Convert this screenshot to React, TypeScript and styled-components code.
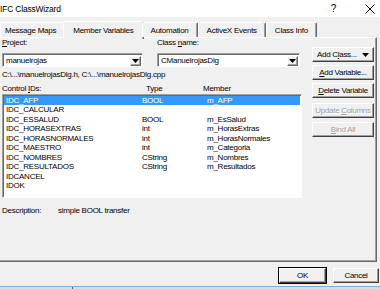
import { FC, ReactNode } from 'react';
import styled, { createGlobalStyle } from 'styled-components';

const GlobalStyle = createGlobalStyle`
  html, body {
    margin: 0;
    padding: 0;
    background: #f0f0f0;
  }
  body {
    font-family: 'Liberation Sans', Arial, sans-serif;
    font-size: 8px;
    letter-spacing: -0.25px;
    color: #000;
  }
`;

const tabs = ['Message Maps', 'Member Variables', 'Automation', 'ActiveX Events', 'Class Info'];

const rows = [
  { id: 'IDC_AFP', type: 'BOOL', member: 'm_AFP' },
  { id: 'IDC_CALCULAR', type: '', member: '' },
  { id: 'IDC_ESSALUD', type: 'BOOL', member: 'm_EsSalud' },
  { id: 'IDC_HORASEXTRAS', type: 'int', member: 'm_HorasExtras' },
  { id: 'IDC_HORASNORMALES', type: 'int', member: 'm_HorasNormales' },
  { id: 'IDC_MAESTRO', type: 'int', member: 'm_Categoria' },
  { id: 'IDC_NOMBRES', type: 'CString', member: 'm_Nombres' },
  { id: 'IDC_RESULTADOS', type: 'CString', member: 'm_Resultados' },
  { id: 'IDCANCEL', type: '', member: '' },
  { id: 'IDOK', type: '', member: '' },
];

const DropArrow: FC = () => (
  <svg width="7" height="4" viewBox="0 0 7 4">
    <path d="M0 0h7L3.5 4z" fill="#000" />
  </svg>
);

const Combo: FC<{ value: string }> = ({ value }) => (
  <ComboStyled>
    <ComboText>{value}</ComboText>
    <ComboButton>
      <DropArrow />
    </ComboButton>
  </ComboStyled>
);

const Button: FC<{ children: ReactNode; disabled?: boolean; isDefault?: boolean }> = ({
  children,
  disabled = false,
  isDefault = false,
}) => (
  <ButtonStyled disabled={disabled} $isDefault={isDefault}>
    {children}
  </ButtonStyled>
);

const App: FC = () => {
  return (
    <>
      <GlobalStyle />
      <WindowStyled>
        <TitleBarStyled>
          <TitleText>IFC ClassWizard</TitleText>
          <TitleControls>
            <HelpGlyph>?</HelpGlyph>
            <svg width="10" height="10" viewBox="0 0 10 10">
              <path d="M0.5 0.5l9 9M9.5 0.5l-9 9" stroke="#000" strokeWidth="1" />
            </svg>
          </TitleControls>
        </TitleBarStyled>

        <TabStripStyled>
          {tabs.map((t, i) => (
            <TabStyled key={t} $active={i === 1}>
              {t}
            </TabStyled>
          ))}
        </TabStripStyled>

        <PanelStyled>
          <LeftColumnStyled>
            <FieldRowStyled>
              <FieldStyled>
                <Label>
                  <u>P</u>roject:
                </Label>
                <Combo value="manuelrojas" />
              </FieldStyled>
              <FieldStyled>
                <Label>
                  Class <u>n</u>ame:
                </Label>
                <Combo value="CManuelrojasDlg" />
              </FieldStyled>
            </FieldRowStyled>
            <PathText>C:\...\manuelrojasDlg.h, C:\...\manuelrojasDlg.cpp</PathText>
            <ListHeaderStyled>
              <span>
                Control <u>I</u>Ds:
              </span>
              <span>Type</span>
              <span>Member</span>
            </ListHeaderStyled>
            <ListBoxStyled>
              {rows.map((r, i) => (
                <ListRowStyled key={r.id} $selected={i === 0}>
                  <span>{r.id}</span>
                  <span>{r.type}</span>
                  <span>{r.member}</span>
                </ListRowStyled>
              ))}
            </ListBoxStyled>
            <DescriptionStyled>
              <span>Description:</span>
              <span>simple BOOL transfer</span>
            </DescriptionStyled>
          </LeftColumnStyled>

          <ButtonColumnStyled>
            <Button>
              <AddClassInner>
                <span>
                  Add C<u>l</u>ass...
                </span>
                <DropArrow />
              </AddClassInner>
            </Button>
            <Button>
              <u>A</u>dd Variable...
            </Button>
            <Button>
              <u>D</u>elete Variable
            </Button>
            <DisabledGroupStyled>
              <Button disabled>
                Update <u>C</u>olumns
              </Button>
              <Button disabled>
                <u>B</u>ind All
              </Button>
            </DisabledGroupStyled>
          </ButtonColumnStyled>
        </PanelStyled>

        <FooterStyled>
          <Button isDefault>OK</Button>
          <Button>Cancel</Button>
        </FooterStyled>

        <TaskStripStyled>
          <TaskItemStyled />
          <TaskItemStyled />
        </TaskStripStyled>
      </WindowStyled>
    </>
  );
};

const WindowStyled = styled.div`
  width: 380px;
  height: 289px;
  overflow: hidden;
  display: flex;
  flex-direction: column;
  background: #f0f0f0;
`;

const TitleBarStyled = styled.div`
  height: 17px;
  flex: none;
  background: #fff;
  display: flex;
  align-items: center;
  justify-content: space-between;
`;

const TitleText = styled.span`
  font-size: 8.5px;
  letter-spacing: -0.2px;
`;

const TitleControls = styled.div`
  display: flex;
  align-items: center;
  gap: 29px;
  margin-right: 5px;
`;

const HelpGlyph = styled.span`
  font-size: 10px;
`;

const TabStripStyled = styled.div`
  flex: none;
  height: 16px;
  margin-top: 4px;
  display: flex;
  align-items: flex-end;
  position: relative;
  z-index: 1;
`;

const TabStyled = styled.div<{ $active: boolean }>`
  box-sizing: border-box;
  height: ${({ $active }) => ($active ? '18px' : '15px')};
  padding: 0 ${({ $active }) => ($active ? '9px' : '8px')};
  margin: 0 ${({ $active }) => ($active ? '-2px' : '0')};
  display: flex;
  align-items: center;
  padding-top: ${({ $active }) => ($active ? '0' : '1px')};
  background: #f0f0f0;
  border-top: 1px solid #fff;
  border-left: 1px solid #fff;
  border-right: 1px solid #696969;
  border-top-left-radius: 2px;
  border-top-right-radius: 2px;
  box-shadow: inset -1px 0 #a0a0a0;
  margin-bottom: ${({ $active }) => ($active ? '-2px' : '0')};
  white-space: nowrap;

  &:first-child {
    margin-left: 0;
    padding-left: 4px;
  }
`;

const PanelStyled = styled.div`
  flex: none;
  box-sizing: border-box;
  width: 377px;
  height: 225px;
  border-top: 1px solid #fff;
  border-right: 1px solid #696969;
  border-bottom: 1px solid #696969;
  box-shadow: inset -1px -1px #a0a0a0;
  display: grid;
  grid-template-columns: 300px 1fr;
  column-gap: 10px;
  padding: 0 0 0 2px;
`;

const LeftColumnStyled = styled.div`
  display: flex;
  flex-direction: column;
`;

const FieldRowStyled = styled.div`
  display: grid;
  grid-template-columns: 141px 143px;
  column-gap: 14px;
`;

const FieldStyled = styled.div`
  display: flex;
  flex-direction: column;
  gap: 5px;
`;

const Label = styled.span`
  line-height: 10px;
  height: 10px;
`;

const ComboStyled = styled.div`
  box-sizing: border-box;
  height: 14px;
  background: #fff;
  border-top: 1px solid #a0a0a0;
  border-left: 1px solid #a0a0a0;
  border-right: 1px solid #fff;
  border-bottom: 1px solid #fff;
  box-shadow: inset 1px 1px #696969;
  display: flex;
  align-items: center;
  justify-content: space-between;
  padding: 1px 1px 0 3px;
`;

const ComboText = styled.span`
  line-height: 10px;
`;

const ComboButton = styled.div`
  box-sizing: border-box;
  width: 11px;
  height: 10px;
  background: #f0f0f0;
  border-top: 1px solid #fff;
  border-left: 1px solid #fff;
  border-right: 1px solid #696969;
  border-bottom: 1px solid #696969;
  box-shadow: inset -1px -1px #a0a0a0;
  display: flex;
  align-items: center;
  justify-content: center;
`;

const PathText = styled.div`
  margin-top: 3px;
  line-height: 10px;
  white-space: nowrap;
`;

const ListHeaderStyled = styled.div`
  margin-top: 4px;
  line-height: 10px;
  display: grid;
  grid-template-columns: 144px 57px 1fr;
`;

const ListBoxStyled = styled.div`
  box-sizing: border-box;
  margin-top: 0;
  height: 104px;
  background: #fff;
  border-top: 1px solid #a0a0a0;
  border-left: 1px solid #a0a0a0;
  border-right: 1px solid #fff;
  border-bottom: 1px solid #fff;
  box-shadow: inset 1px 1px #696969;
  padding: 1px 1px 0 1px;
`;

const ListRowStyled = styled.div<{ $selected: boolean }>`
  display: grid;
  grid-template-columns: 136px 65px 1fr;
  height: 9.45px;
  line-height: 9.45px;
  padding-left: 2px;
  white-space: nowrap;
  background: ${({ $selected }) => ($selected ? '#3399ff' : 'transparent')};
  color: ${({ $selected }) => ($selected ? '#fff' : '#000')};
`;

const DescriptionStyled = styled.div`
  margin-top: 8px;
  line-height: 10px;
  display: grid;
  grid-template-columns: 56px 1fr;
`;

const ButtonColumnStyled = styled.div`
  display: flex;
  flex-direction: column;
  gap: 3px;
  padding-top: 9px;
  width: 62px;
`;

const DisabledGroupStyled = styled.div`
  display: flex;
  flex-direction: column;
  gap: 4px;
  margin-top: 2px;
`;

const ButtonStyled = styled.button<{ $isDefault: boolean }>`
  box-sizing: border-box;
  height: 15px;
  padding: 0;
  margin: 0;
  font: inherit;
  letter-spacing: -0.3px;
  line-height: 11px;
  background: #f0f0f0;
  color: #000;
  white-space: nowrap;
  overflow: hidden;
  border-top: 1px solid #fff;
  border-left: 1px solid #fff;
  border-right: 1px solid #404040;
  border-bottom: 1px solid #404040;
  box-shadow: inset -1px -1px #a0a0a0;
  outline: ${({ $isDefault }) => ($isDefault ? '1px solid #000' : 'none')};
  outline-offset: 0;

  &:disabled {
    color: #a0a0a0;
    text-shadow: 1px 1px #fff;
  }
`;

const AddClassInner = styled.span`
  display: flex;
  align-items: center;
  justify-content: space-between;
  padding: 0 4px 0 4px;
`;

const FooterStyled = styled.div`
  flex: none;
  display: flex;
  justify-content: flex-end;
  gap: 7px;
  margin-top: 6px;
  padding-right: 1px;

  & > button {
    width: 47px;
  }
  & > button:last-child {
    width: 46px;
  }
`;

const TaskStripStyled = styled.div`
  flex: none;
  margin-top: 3px;
  height: 5px;
  border-top: 1px solid #79b0e4;
  background: #dcdcdc;
  display: grid;
  grid-template-columns: 73px 1fr;
`;

const TaskItemStyled = styled.div`
  border-right: 1px solid #606060;

  &:last-child {
    border-right: none;
  }
`;

export default App;
